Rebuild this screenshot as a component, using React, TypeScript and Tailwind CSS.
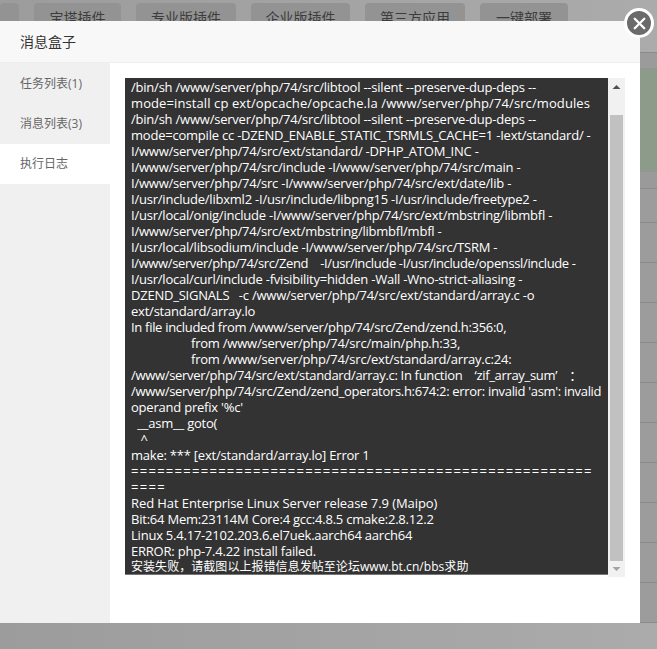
import { X } from "lucide-react";

const tabs = [
  { label: "", cls: "w-[19px]" },
  { label: "宝塔插件", cls: "w-[87px]" },
  { label: "专业版插件", cls: "w-[100px]" },
  { label: "企业版插件", cls: "w-[99px]" },
  { label: "第三方应用", cls: "w-[100px]" },
  { label: "一键部署", cls: "w-[88px]" },
];

const logLines = [
  { text: "/bin/sh /www/server/php/74/src/libtool --silent --preserve-dup-deps --" },
  { text: "mode=install cp ext/opcache/opcache.la /www/server/php/74/src/modules", cls: "tracking-[0.1px]" },
  { text: "/bin/sh /www/server/php/74/src/libtool --silent --preserve-dup-deps --" },
  { text: "mode=compile cc -DZEND_ENABLE_STATIC_TSRMLS_CACHE=1 -Iext/standard/ -" },
  { text: "I/www/server/php/74/src/ext/standard/ -DPHP_ATOM_INC -" },
  { text: "I/www/server/php/74/src/include -I/www/server/php/74/src/main -" },
  { text: "I/www/server/php/74/src -I/www/server/php/74/src/ext/date/lib -" },
  { text: "I/usr/include/libxml2 -I/usr/include/libpng15 -I/usr/include/freetype2 -" },
  { text: "I/usr/local/onig/include -I/www/server/php/74/src/ext/mbstring/libmbfl -" },
  { text: "I/www/server/php/74/src/ext/mbstring/libmbfl/mbfl -" },
  { text: "I/usr/local/libsodium/include -I/www/server/php/74/src/TSRM -" },
  { text: "I/www/server/php/74/src/Zend    -I/usr/include -I/usr/include/openssl/include -", cls: "tracking-[-0.37px]" },
  { text: "I/usr/local/curl/include -fvisibility=hidden -Wall -Wno-strict-aliasing -" },
  { text: "DZEND_SIGNALS   -c /www/server/php/74/src/ext/standard/array.c -o" },
  { text: "ext/standard/array.lo" },
  { text: "In file included from /www/server/php/74/src/Zend/zend.h:356:0,", cls: "tracking-[-0.3px]" },
  { text: "                   from /www/server/php/74/src/main/php.h:33," },
  { text: "                   from /www/server/php/74/src/ext/standard/array.c:24:" },
  { text: "/www/server/php/74/src/ext/standard/array.c: In function    ‘zif_array_sum’    ：", cls: "tracking-[-0.32px]" },
  { text: "/www/server/php/74/src/Zend/zend_operators.h:674:2: error: invalid 'asm': invalid", cls: "tracking-[-0.32px]" },
  { text: "operand prefix '%c'" },
  { text: "  __asm__ goto(" },
  { text: "   ^" },
  { text: "make: *** [ext/standard/array.lo] Error 1" },
  { text: "=====================================================", cls: "tracking-[1.28px]" },
  { text: "====", cls: "tracking-[1.28px]" },
  { text: "Red Hat Enterprise Linux Server release 7.9 (Maipo)", cls: "tracking-[-0.08px]" },
  { text: "Bit:64 Mem:23114M Core:4 gcc:4.8.5 cmake:2.8.12.2" },
  { text: "Linux 5.4.17-2102.203.6.el7uek.aarch64 aarch64" },
  { text: "ERROR: php-7.4.22 install failed." },
  { text: "安装失败，请截图以上报错信息发帖至论坛www.bt.cn/bbs求助", cls: "text-[12px] tracking-[0.05px]" },
];

const rowHeights = ["h-[34px]", "h-[40px]", "h-[40px]", "h-[40px]", "h-[40px]", "h-[40px]", "h-[40px]", "h-[40px]", "h-[40px]", "h-[40px]", "h-[40px]"];

export default function App() {
  return (
    <div className="relative h-[649px] w-[657px] overflow-hidden bg-gradient-to-r from-[#9c9c9c] to-[#ababab] font-['Open_Sans','Noto_Sans_CJK_SC',sans-serif]">
      {/* page behind the overlay */}
      <div className="flex gap-[15px] pt-[3px]">
        {tabs.map((t, i) => (
          <div key={i} className={`${t.cls} flex h-[30px] items-center justify-center rounded-sm bg-[#939393] text-sm text-[#3c3c3c]`}>
            {t.label}
          </div>
        ))}
      </div>
      <div className="mt-[19px] h-[16px] border-t border-[#8a8a8a] bg-[#9b9b9b]" />
      <div className="h-[104px] bg-[#8c9b8a]" />
      <div className="h-[16px] bg-[#9a9a9a]" />
      {rowHeights.map((h, i) => (
        <div key={i} className={`${h} border-t border-[#8b8b8b] bg-[#9c9c9c]`} />
      ))}
      <div className="h-[40px] border-t border-[#8b8b8b]" />

      {/* modal */}
      <div className="absolute left-0 top-[21px] flex h-[602px] w-[640px] flex-col bg-white">
        <div className="flex h-[42px] shrink-0 items-center border-b border-[#eeeeee] bg-[#f8f8f8] pl-5 text-sm text-[#333333]">
          消息盒子
        </div>
        <div className="flex min-h-0 flex-1">
          <div className="w-[110px] shrink-0 bg-[#f0f0f1] pt-px text-xs text-[#666666]">
            <div className="flex h-10 items-center pl-5">任务列表(1)</div>
            <div className="flex h-10 items-center pl-5">消息列表(3)</div>
            <div className="flex h-10 items-center bg-white pl-5">执行日志</div>
          </div>
          <div className="flex flex-1 items-start pl-[15px] pt-[15px]">
            <div className="h-[497px] w-[483px] shrink-0 overflow-hidden border-b border-[#777777] bg-[#333333] pl-[6px] pt-[1px] text-[13px] leading-[16px] tracking-[-0.22px] text-white">
              {logLines.map((line, i) => (
                <div key={i} className={`whitespace-pre ${line.cls ?? ""}`}>
                  {line.text}
                </div>
              ))}
            </div>
            <div className="flex h-[499px] w-[17px] shrink-0 flex-col items-center bg-[#f1f1f1]">
              <svg width="17" height="17" viewBox="0 0 17 17" className="shrink-0">
                <path d="M4.5 11 L8.5 7 L12.5 11 Z" fill="#505050" />
              </svg>
              <div className="mt-5 h-[446px] w-[13px] bg-[#c1c1c1]" />
              <svg width="17" height="16" viewBox="0 0 17 16" className="shrink-0">
                <path d="M4.5 6 L8.5 10 L12.5 6 Z" fill="#a3a3a3" />
              </svg>
            </div>
          </div>
        </div>
        <div className="absolute left-[624px] top-[-13px] flex h-[30px] w-[30px] items-center justify-center rounded-full border-[3px] border-white bg-[#6b6b6b]">
          <X size={19} strokeWidth={3} className="text-white" />
        </div>
      </div>
    </div>
  );
}
